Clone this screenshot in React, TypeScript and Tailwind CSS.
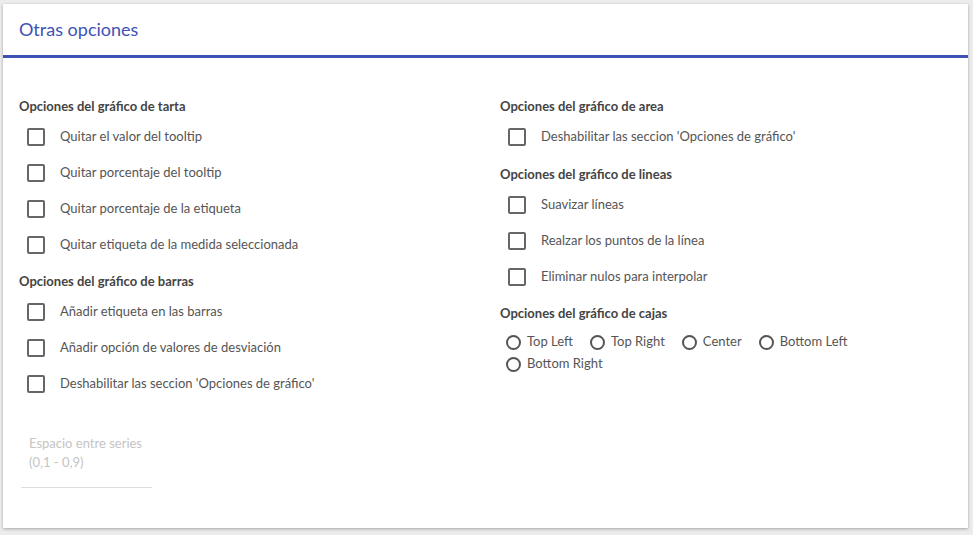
import React from "react";

const Check = ({ label }: { label: string }) => (
  <div className="flex items-center h-[36px] pl-[8px]">
    <div className="w-[18px] h-[18px] border-2 border-[#666] rounded-[2px]" />
    <span className="ml-[15px] text-[13px] text-[#555]">{label}</span>
  </div>
);
const Head = ({ t, cls = "" }: { t: string; cls?: string }) => (
  <div className={"text-[13px] font-bold text-[#444] h-[20px] leading-[20px] mb-[3px] " + cls}>{t}</div>
);
const Radio = ({ label }: { label: string }) => (
  <div className="flex items-center mr-[17px] h-[22px]">
    <div className="w-[15px] h-[15px] border-2 border-[#555] rounded-full" />
    <span className="ml-[6px] text-[13px] text-[#555]">{label}</span>
  </div>
);

export default function App() {
  return (
    <div className="w-[973px] h-[535px] bg-[#ececec] pt-[4px] pl-[3px]" style={{ fontFamily: "Lato, 'Open Sans', sans-serif" }}>
      <div className="w-[965px] h-[524px] bg-white shadow-[0_1px_3px_rgba(0,0,0,0.3)]">
        <div className="h-[54px] flex items-center pl-[16px] text-[18px] text-[#3f51b5] border-b-[3px] border-[#3f51b5]">Otras opciones</div>
        <div className="flex pt-[38px] pl-[16px]">
          <div className="w-[481px]">
            <Head t="Opciones del gráfico de tarta" />
            <Check label="Quitar el valor del tooltip" />
            <Check label="Quitar porcentaje del tooltip" />
            <Check label="Quitar porcentaje de la etiqueta" />
            <Check label="Quitar etiqueta de la medida seleccionada" />
            <Head t="Opciones del gráfico de barras" cls="mt-[8px]" />
            <Check label="Añadir etiqueta en las barras" />
            <Check label="Añadir opción de valores de desviación" />
            <Check label="Deshabilitar las seccion 'Opciones de gráfico'" />
            <div className="ml-[2px] mt-[32px] w-[131px] border-b border-[#ddd] pb-[15px] pl-[8px] text-[13px] leading-[19px] text-[#c4c4c4]">
              Espacio entre series<br />(0,1 - 0,9)
            </div>
          </div>
          <div className="flex-1">
            <Head t="Opciones del gráfico de area" />
            <Check label="Deshabilitar las seccion 'Opciones de gráfico'" />
            <Head t="Opciones del gráfico de lineas" cls="mt-[9px]" />
            <Check label="Suavizar líneas" />
            <Check label="Realzar los puntos de la línea" />
            <Check label="Eliminar nulos para interpolar" />
            <Head t="Opciones del gráfico de cajas" cls="mt-[8px]" />
            <div className="flex flex-wrap w-[380px] pl-[6px] mt-[8px]">
              <Radio label="Top Left" />
              <Radio label="Top Right" />
              <Radio label="Center" />
              <Radio label="Bottom Left" />
              <Radio label="Bottom Right" />
            </div>
          </div>
        </div>
      </div>
    </div>
  );
}
